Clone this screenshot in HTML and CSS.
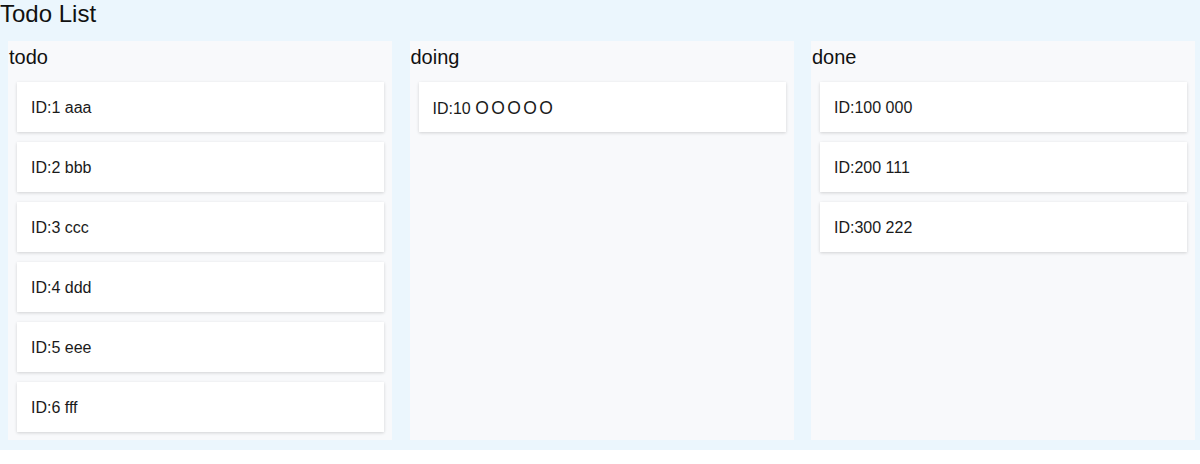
FILE: index.html
```html
<!DOCTYPE html>
<html lang="ja">
<head>
<meta charset="utf-8">
<title>Todo List</title>
<link rel="stylesheet" href="styles.css">
</head>
<body>
<div class="app">
  <h1 class="title">Todo List</h1>
  <div class="board">
    <section class="column">
      <h2 class="column-title">todo</h2>
      <div class="cards">
        <div class="card"><span>ID:1 aaa</span></div>
        <div class="card"><span>ID:2 bbb</span></div>
        <div class="card"><span>ID:3 ccc</span></div>
        <div class="card"><span>ID:4 ddd</span></div>
        <div class="card"><span>ID:5 eee</span></div>
        <div class="card"><span>ID:6 fff</span></div>
      </div>
    </section>
    <section class="column">
      <h2 class="column-title">doing</h2>
      <div class="cards">
        <div class="card"><span>ID:10 <span class="circles">OOOOO</span></span></div>
      </div>
    </section>
    <section class="column">
      <h2 class="column-title">done</h2>
      <div class="cards">
        <div class="card"><span>ID:100 000</span></div>
        <div class="card"><span>ID:200 111</span></div>
        <div class="card"><span>ID:300 222</span></div>
      </div>
    </section>
  </div>
</div>
</body>
</html>
```
FILE: styles.css
```css
* { box-sizing: border-box; }
html, body { margin: 0; padding: 0; background: #ffffff; }
body {
  font-family: "Liberation Sans", Arial, "Noto Sans CJK JP", sans-serif;
  color: #111;
}
.app {
  background: #ebf6fd;
  height: 450px;
  display: flex;
  flex-direction: column;
}
.title {
  margin: 0;
  font-size: 24px;
  font-weight: 400;
  line-height: 28px;
}
.board {
  margin-top: 13px;
  padding-left: 8px;
  display: flex;
  gap: 17.5px;
  height: 399px;
}
.column {
  width: 384px;
  background: #f8f9fb;
  padding: 4px 0 8px 1px;
  display: flex;
  flex-direction: column;
}
.column-title {
  margin: 0 0 13px 0;
  font-size: 20px;
  font-weight: 400;
  line-height: 24px;
}
.cards {
  display: flex;
  flex-direction: column;
  gap: 10px;
  padding: 0 8px 0 8px;
}
.card {
  height: 50px;
  background: #ffffff;
  box-shadow: 0 1px 3px rgba(0, 0, 0, 0.16);
  padding: 2px 0 0 14px;
  display: flex;
  align-items: center;
  font-size: 16px;
  color: #1a1a1a;
}
.circles {
  font-size: 17.5px;
  letter-spacing: 2.4px;
}
```
